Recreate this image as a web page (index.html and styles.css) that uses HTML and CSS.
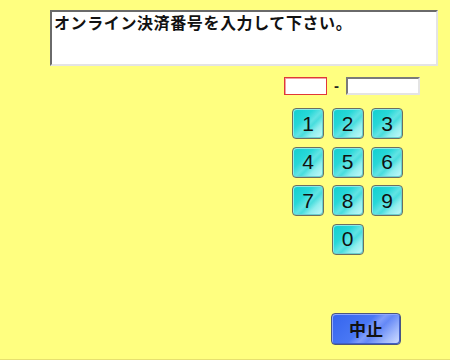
FILE: index.html
```html
<!DOCTYPE html>
<html lang="ja">
<head>
<meta charset="utf-8">
<link rel="stylesheet" href="styles.css">
</head>
<body>
<div class="screen">
  <div class="msg">オンライン決済番号を入力して下さい。</div>
  <div class="code-row">
    <div class="field field-active"></div>
    <span class="dash">-</span>
    <div class="field field-long"></div>
  </div>
  <div class="keypad">
    <div class="key">1</div>
    <div class="key">2</div>
    <div class="key">3</div>
    <div class="key">4</div>
    <div class="key">5</div>
    <div class="key">6</div>
    <div class="key">7</div>
    <div class="key">8</div>
    <div class="key">9</div>
    <div class="key key-zero">0</div>
  </div>
  <div class="stop-row">
    <div class="stop">中止</div>
  </div>
</div>
</body>
</html>
```
FILE: styles.css
```css
html, body {
  margin: 0;
  padding: 0;
}
body {
  background: #ffff80;
  font-family: "Noto Sans CJK JP", "DejaVu Sans", sans-serif;
}
.screen {
  height: 359px;
  border-bottom: 1px solid #e6e070;
  display: flex;
  flex-direction: column;
  overflow: hidden;
}
.msg {
  margin: 10px 0 0 50px;
  width: 388px;
  height: 56px;
  box-sizing: border-box;
  background: #fff;
  border-style: solid;
  border-width: 2px;
  border-color: #6a6a6a #e4e4e4 #e4e4e4 #6a6a6a;
  padding: 0 0 0 2px;
  font-size: 16px;
  font-weight: bold;
  line-height: 20px;
  letter-spacing: 0.6px;
  color: #111;
}
.code-row {
  margin: 11px 0 0 284px;
  display: flex;
  align-items: center;
  height: 18px;
}
.field {
  height: 18px;
  box-sizing: border-box;
  background: #fff;
}
.field-active {
  width: 43px;
  border: 1px solid #e03838;
  box-shadow: inset 1px 1px 0 #f0a0a0;
}
.dash {
  width: 19px;
  text-align: center;
  font-family: "Liberation Sans", sans-serif;
  font-size: 15px;
  font-weight: bold;
  line-height: 18px;
  color: #222;
}
.field-long {
  width: 74px;
  border-style: solid;
  border-width: 2px;
  border-color: #7a7a7a #e4e4e4 #e4e4e4 #7a7a7a;
}
.keypad {
  margin: 13px 0 0 292px;
  display: grid;
  grid-template-columns: repeat(3, 32px);
  grid-auto-rows: 31px;
  column-gap: 7.5px;
  row-gap: 7.5px;
}
.key {
  box-sizing: border-box;
  border: 1px solid #6d6f60;
  border-radius: 4px;
  background: linear-gradient(135deg, #10cfcf 0%, #28d8d8 35%, #62e4e4 52%, #48dddd 60%, #90eeee 74%, #c8fafa 100%);
  box-shadow: inset 1px 1px 0 #8aeaea, inset -1px -1px 0 #6ad0d0;
  display: flex;
  align-items: center;
  justify-content: center;
  font-family: "Liberation Sans", sans-serif;
  font-size: 21px;
  color: #111;
}
.key-zero {
  grid-column: 2;
}
.stop-row {
  margin: 58px 0 0 331px;
}
.stop {
  width: 70px;
  height: 32px;
  box-sizing: border-box;
  border: 1px solid #4a5680;
  border-radius: 4px;
  background: linear-gradient(135deg, #3464ee 0%, #4a78f4 45%, #7e9cfa 56%, #6488f6 64%, #a0b8fc 82%, #d4e0ff 100%);
  box-shadow: inset 1px 1px 0 #90a8ff, inset -1px -1px 0 #4060c8;
  display: flex;
  align-items: center;
  justify-content: center;
  font-size: 17px;
  font-weight: bold;
  color: #111;
}
```
